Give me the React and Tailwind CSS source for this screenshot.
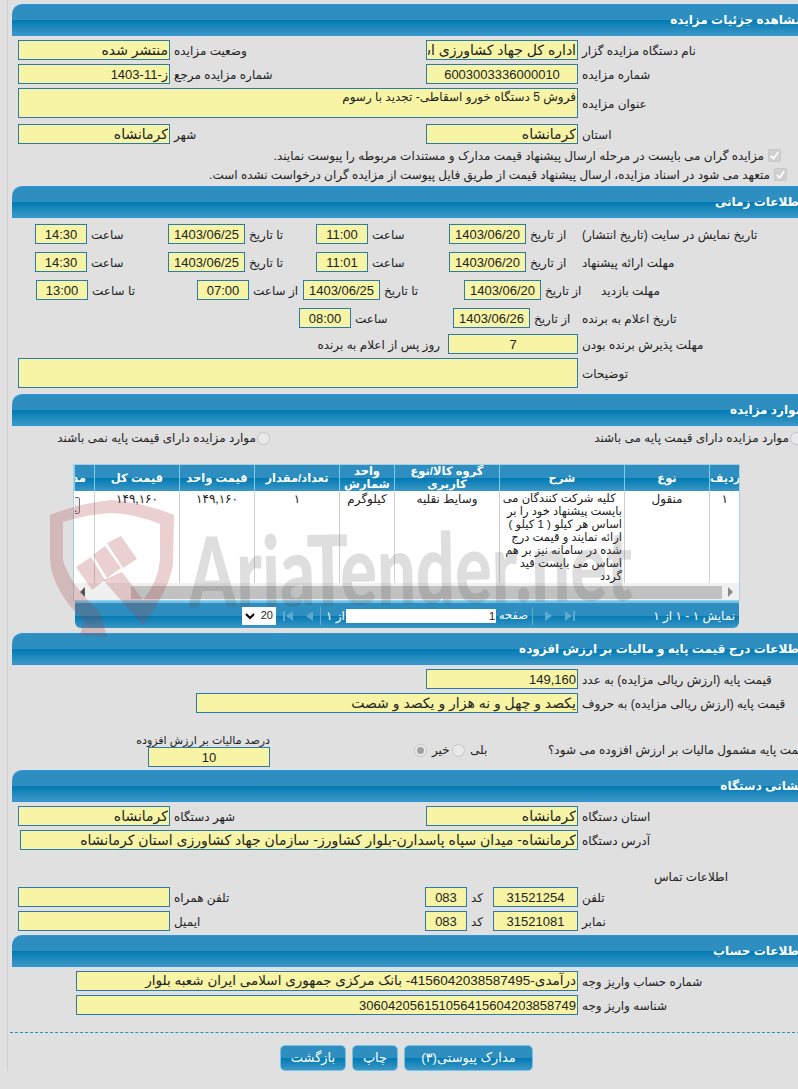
import React from "react";

const headerBg =
  "bg-[linear-gradient(#2e8ebf_0%,#2e8ebf_50%,#0079b2_50%,#3c97c6_100%)]";

const Field = ({ w, value = "", center, size }) => {
  const digits = /^[\d/:,\-ز]*$/.test(value);
  const textSize = size || (digits ? "text-[13px]" : "text-[14px]");
  return (
    <input
      readOnly
      dir="rtl"
      value={value}
      className={`block h-[20px] shrink-0 border border-[#2a7bab] bg-[#f7f5a5] px-[1px] text-[#222] outline-none ${textSize} ${
        center ? "text-center" : "text-right"
      } ${w}`}
    />
  );
};

const Area = ({ w, h, value = "" }) => (
  <textarea
    readOnly
    dir="rtl"
    value={value}
    className={`shrink-0 resize-none overflow-hidden border border-[#2a7bab] bg-[#f7f5a5] px-[1px] text-right text-[12px] leading-[17px] text-[#222] outline-none ${w} ${h}`}
  />
);

const Label = ({ w, right, children }) => (
  <span
    dir="rtl"
    className={`shrink-0 whitespace-nowrap pt-[1px] text-[12px] text-[#222] ${
      right ? "pr-[8px] text-right" : "pl-[4px] text-left"
    } ${w}`}
  >
    {children}
  </span>
);

const Row = ({ className = "", children }) => (
  <div className={`flex items-center ${className}`}>{children}</div>
);

const Section = ({ title, body, children }) => (
  <section className="w-[791px]">
    <div
      dir="rtl"
      className={`flex h-[32px] items-center overflow-hidden rounded-tl-[10px] border-y border-[#2a96e0] text-[12px] font-bold text-white ${headerBg}`}
    >
      {title}
    </div>
    <div className={body}>{children}</div>
  </section>
);

const Th = ({ clip, children }) => (
  <th
    className={`h-[26px] overflow-hidden border-l border-[#7ccdf0] text-[11.5px] font-bold leading-[13px] text-white ${headerBg} ${
      clip ? "whitespace-nowrap pr-[8px] text-right" : "px-0 text-center"
    }`}
  >
    {children}
  </th>
);

const Td = ({ children }) => (
  <td className="border-l border-[#cfcfcf] px-[4px] pt-[2px] align-top text-center text-[12px] leading-[13px] text-[#222]">
    {children}
  </td>
);

const Tri = ({ left, bar }) => (
  <svg viewBox="0 0 12 10" className="h-[10px] w-[12px] shrink-0 fill-[#5ea9d0]">
    <path d={left ? "M10 0v10L3 5z" : "M2 0v10l7-5z"} />
    {bar && <rect x={left ? 0 : 10} width="2" height="10" />}
  </svg>
);

const Btn = ({ w, children }) => (
  <button
    dir="rtl"
    className={`h-[26px] rounded-[5px] border border-[#74c4ea] text-[13px] text-white ${headerBg} ${w}`}
  >
    {children}
  </button>
);

const Radio = ({ checked }) => (
  <span className="flex h-[13px] w-[13px] shrink-0 items-center justify-center rounded-full border border-[#c4c4c4] bg-[#e9e9e9]">
    {checked && <span className="h-[7px] w-[7px] rounded-full bg-[#a0a0a0]" />}
  </span>
);

const Check = () => (
  <span className="flex h-[13px] w-[13px] shrink-0 items-center justify-center rounded-[2px] border border-[#c8c8c8] bg-[#d0d0d0]">
    <svg viewBox="0 0 12 12" className="h-[11px] w-[11px] fill-none stroke-white stroke-2">
      <path d="M2 6.5l3 3 5-7" />
    </svg>
  </span>
);

const Watermark = () => (
  <>
    <svg
      viewBox="0 0 798 1089"
      className="pointer-events-none absolute left-0 top-0 h-[1089px] w-[798px]"
    >
      <g fill="#a83a3a" fillOpacity="0.24">
        <path d="M50 515Q80 503 112 500Q145 503 174 515L173 565Q168 592 143 625L103 580L122 572L143 600Q158 582 160 560L160 524Q135 514 112 513Q88 514 63 522L63 560Q70 585 100 612L107 637L80 635L84 621Q52 590 50 560z" />
        <path d="M76 567L91 557L105 580L92 590z" />
        <path d="M93 555L105 546L121 568L107 578z" />
        <path d="M107 543L121 536L137 559L123 568z" />
      </g>
    </svg>
    <span className="pointer-events-none absolute left-[188px] top-[497px] origin-left -rotate-1 scale-x-[0.7] whitespace-nowrap text-[98px] font-black text-[#50505030] [font-family:Lato,sans-serif]">
      AriaTender.net
    </span>
  </>
);

export default function App() {
  return (
    <div className="relative h-[1089px] w-[798px] overflow-hidden bg-[#e0e0e0] [font-family:'Liberation_Sans','DejaVu_Sans',sans-serif]">
      <div className="ml-[7px] w-[900px] border-l border-[#cfcfcf] pl-[4px] pt-[4px]">
        <Section title="مشاهده جزئیات مزایده" body="h-[150px] pt-[4px]">
          <Row className="pl-[6px]">
            <Field w="w-[152px]" value="منتشر شده" />
            <Label w="w-[256px]">وضعیت مزایده</Label>
            <Field w="w-[152px]" value="اداره کل جهاد کشاورزی استان کرمانشاه" />
            <Label w="w-[200px]">نام دستگاه مزایده گزار</Label>
          </Row>
          <Row className="mt-[4px] pl-[6px]">
            <Field w="w-[152px]" value="ز-11-1403" />
            <Label w="w-[256px]">شماره مزایده مرجع</Label>
            <Field w="w-[152px]" value="6003003336000010" center />
            <Label w="w-[200px]">شماره مزایده</Label>
          </Row>
          <Row className="mt-[4px] pl-[6px]">
            <Area w="w-[560px]" h="h-[30px]" value="فروش 5 دستگاه خورو اسقاطی- تجدید با رسوم" />
            <Label w="w-[200px]">عنوان مزایده</Label>
          </Row>
          <Row className="mt-[6px] pl-[6px]">
            <Field w="w-[152px]" value="کرمانشاه" />
            <Label w="w-[256px]">شهر</Label>
            <Field w="w-[152px]" value="کرمانشاه" />
            <Label w="w-[200px]">استان</Label>
          </Row>
          <div dir="rtl" className="mt-[4px] flex h-[15px] items-center gap-[4px] pr-[22px] text-[12px] text-[#222]">
            <Check />
            <span>مزایده گران می بایست در مرحله ارسال پیشنهاد قیمت مدارک و مستندات مربوطه را پیوست نمایند.</span>
          </div>
          <div dir="rtl" className="mt-[4px] flex h-[15px] items-center gap-[4px] pr-[16px] text-[12px] text-[#222]">
            <Check />
            <span>متعهد می شود در اسناد مزایده، ارسال پیشنهاد قیمت از طریق فایل پیوست از مزایده گران درخواست نشده است.</span>
          </div>
        </Section>

        <Section title="اطلاعات زمانی" body="h-[176px] pt-[6px]">
          <Row className="pl-[23px]">
            <Field w="w-[52px]" value="14:30" center />
            <Label w="w-[81px]">ساعت</Label>
            <Field w="w-[77px]" value="1403/06/25" center />
            <Label w="w-[71px]">تا تاریخ</Label>
            <Field w="w-[52px]" value="11:00" center />
            <Label w="w-[81px]">ساعت</Label>
            <Field w="w-[77px]" value="1403/06/20" center />
            <Label w="w-[52px]">از تاریخ</Label>
            <Label w="w-[200px]">تاریخ نمایش در سایت (تاریخ انتشار)</Label>
          </Row>
          <Row className="mt-[8px] pl-[23px]">
            <Field w="w-[52px]" value="14:30" center />
            <Label w="w-[81px]">ساعت</Label>
            <Field w="w-[77px]" value="1403/06/25" center />
            <Label w="w-[71px]">تا تاریخ</Label>
            <Field w="w-[52px]" value="11:01" center />
            <Label w="w-[81px]">ساعت</Label>
            <Field w="w-[77px]" value="1403/06/20" center />
            <Label w="w-[52px]">از تاریخ</Label>
            <Label w="w-[200px]">مهلت ارائه پیشنهاد</Label>
          </Row>
          <Row className="mt-[8px] pl-[24px]">
            <Field w="w-[52px]" value="13:00" center />
            <Label w="w-[109px]">تا ساعت</Label>
            <Field w="w-[52px]" value="07:00" center />
            <Label w="w-[54px]">از ساعت</Label>
            <Field w="w-[77px]" value="1403/06/25" center />
            <Label w="w-[84px]">تا تاریخ</Label>
            <Field w="w-[77px]" value="1403/06/20" center />
            <Label w="w-[56px]">از تاریخ</Label>
            <Label w="w-[200px]">مهلت بازدید</Label>
          </Row>
          <Row className="mt-[8px] pl-[287px]">
            <Field w="w-[52px]" value="08:00" center />
            <Label w="w-[102px]">ساعت</Label>
            <Field w="w-[77px]" value="1403/06/26" center />
            <Label w="w-[48px]">از تاریخ</Label>
            <Label w="w-[200px]">تاریخ اعلام به برنده</Label>
          </Row>
          <Row className="mt-[6px]">
            <Label right w="w-[436px]">روز پس از اعلام به برنده</Label>
            <Field w="w-[130px]" value="7" center />
            <Label w="w-[200px]">مهلت پذیرش برنده بودن</Label>
          </Row>
          <Row className="mt-[4px] pl-[6px]">
            <Area w="w-[560px]" h="h-[30px]" />
            <Label w="w-[200px]">توضیحات</Label>
          </Row>
        </Section>

        <Section title="موارد مزایده" body="h-[207px] pt-[3px]">
          <div className="flex h-[18px] items-center">
            <div dir="rtl" className="ml-[43px] flex w-[215px] items-center justify-start gap-[1px] text-[12px] text-[#222]">
              <Radio />
              <span className="whitespace-nowrap">موارد مزایده دارای قیمت پایه نمی باشند</span>
            </div>
            <div dir="rtl" className="ml-[322px] flex w-[211px] items-center gap-[1px] text-[12px] text-[#222]">
              <Radio />
              <span className="whitespace-nowrap">موارد مزایده دارای قیمت پایه می باشند</span>
            </div>
          </div>
          <div className="ml-[61px] mt-[17px] h-[137px] w-[667px] overflow-hidden border border-[#a5cfe6] bg-white">
            <table dir="rtl" className="w-[665px] table-fixed border-collapse">
              <colgroup>
                <col className="w-[30px]" />
                <col className="w-[85px]" />
                <col className="w-[125px]" />
                <col className="w-[105px]" />
                <col className="w-[55px]" />
                <col className="w-[85px]" />
                <col className="w-[75px]" />
                <col className="w-[85px]" />
                <col className="w-[20px]" />
              </colgroup>
              <thead>
                <tr>
                  <Th>ردیف</Th>
                  <Th>نوع</Th>
                  <Th>شرح</Th>
                  <Th>گروه کالا/نوع کاربری</Th>
                  <Th>واحد شمارش</Th>
                  <Th>تعداد/مقدار</Th>
                  <Th>قیمت واحد</Th>
                  <Th>قیمت کل</Th>
                  <Th clip>مدارک</Th>
                </tr>
              </thead>
              <tbody>
                <tr className="h-[92px]">
                  <Td>۱</Td>
                  <Td>منقول</Td>
                  <td className="whitespace-nowrap border-l border-[#cfcfcf] pr-[2px] pt-[1px] align-top text-right text-[11.5px] leading-[13px] text-[#222]">
                    &nbsp;&nbsp;کلیه شرکت کنندگان می
                    <br />
                    بایست پیشنهاد خود را بر
                    <br />
                    اساس هر کیلو ( 1 کیلو )
                    <br />
                    ارائه نمایند و قیمت درج
                    <br />
                    شده در سامانه نیز بر هم
                    <br />
                    اساس می بایست قید
                    <br />
                    گردد
                  </td>
                  <Td>وسایط نقلیه</Td>
                  <Td>کیلوگرم</Td>
                  <Td>۱</Td>
                  <Td>۱۴۹,۱۶۰</Td>
                  <Td>۱۴۹,۱۶۰</Td>
                  <td className="overflow-hidden pt-[6px] align-top">
                    <span className="mr-[14px] flex h-[17px] w-[14px] items-center justify-center rounded-[2px] border border-[#777] bg-[#eee] text-[10px]">ج</span>
                  </td>
                </tr>
              </tbody>
            </table>
            <div className="flex h-[18px] items-center bg-[#f0f0f0]">
              <svg viewBox="0 0 8 10" className="ml-[5px] h-[10px] w-[8px] fill-[#555]">
                <path d="M6 0v10L1 5z" />
              </svg>
              <div className="ml-[44px] h-[13px] w-[591px] bg-[#c1c1c1]" />
              <svg viewBox="0 0 8 10" className="ml-[4px] h-[10px] w-[8px] fill-[#888]">
                <path d="M2 0v10l5-5z" />
              </svg>
            </div>
          </div>
          <div className={`ml-[63px] flex h-[27px] w-[664px] items-center rounded-b-[6px] border-t-2 border-[#6cc4ec] text-[12px] text-white ${headerBg}`}>
            <div className="ml-[167px] flex h-[18px] w-[34px] shrink-0 items-center justify-between bg-white px-[3px] text-[11px] text-[#222]">
              <svg viewBox="0 0 10 8" className="h-[8px] w-[10px] fill-none stroke-black stroke-2">
                <path d="M1 2l4 4 4-4" />
              </svg>
              20
            </div>
            <div className="ml-[7px] flex gap-[8px]">
              <Tri left bar />
              <Tri left />
            </div>
            <div className="ml-[5px] h-[18px] w-px bg-[#6aa8c8]" />
            <span dir="rtl" className="ml-[5px] w-[20px] whitespace-nowrap text-left">از ۱</span>
            <div dir="rtl" className="h-[14px] w-[150px] bg-white px-[1px] text-right text-[11px] leading-[14px] text-[#222]">1</div>
            <span dir="rtl" className="ml-[4px] w-[28px] whitespace-nowrap text-[11.5px]">صفحه</span>
            <div className="ml-[4px] h-[18px] w-px bg-[#6aa8c8]" />
            <div className="ml-[10px] flex gap-[8px]">
              <Tri />
              <Tri bar />
            </div>
            <span dir="rtl" className="ml-auto pr-[4px]">نمایش ۱ - ۱ از ۱</span>
          </div>
        </Section>

        <Section title="اطلاعات درج قیمت پایه و مالیات بر ارزش افزوده" body="h-[105px] pt-[4px]">
          <Row className="pl-[414px]">
            <Field w="w-[152px]" value="149,160" />
            <Label w="w-[220px]">قیمت پایه (ارزش ریالی مزایده) به عدد</Label>
          </Row>
          <Row className="mt-[4px] pl-[184px]">
            <Field w="w-[382px]" value="یکصد و چهل و نه هزار و یکصد و شصت" />
            <Label w="w-[230px]">قیمت پایه (ارزش ریالی مزایده) به حروف</Label>
          </Row>
          <div className="mt-[20px] flex items-end">
            <div className="ml-[136px] w-[122px]">
              <div dir="rtl" className="whitespace-nowrap text-[11px] leading-[14px] text-[#222]">درصد مالیات بر ارزش افزوده</div>
              <Field w="w-[122px]" value="10" center />
            </div>
            <div className="mb-[7px] ml-[144px] flex h-[20px] items-center">
              <Radio checked />
              <span dir="rtl" className="ml-[5px] w-[20px] text-left text-[12px] text-[#222]">خیر</span>
              <Radio />
              <span dir="rtl" className="ml-[5px] w-[78px] text-left text-[12px] text-[#222]">بلی</span>
              <span dir="rtl" className="whitespace-nowrap text-[12px] text-[#222]">قیمت پایه مشمول مالیات بر ارزش افزوده می شود؟</span>
            </div>
          </div>
        </Section>

        <Section title="نشانی دستگاه" body="h-[133px] pt-[4px]">
          <Row className="pl-[6px]">
            <Field w="w-[152px]" value="کرمانشاه" />
            <Label w="w-[256px]">شهر دستگاه</Label>
            <Field w="w-[152px]" value="کرمانشاه" />
            <Label w="w-[200px]">استان دستگاه</Label>
          </Row>
          <Row className="mt-[4px] pl-[8px]">
            <Field w="w-[558px]" value="کرمانشاه- میدان سپاه پاسدارن-بلوار کشاورز- سازمان جهاد کشاورزی استان کرمانشاه" />
            <Label w="w-[200px]">آدرس دستگاه</Label>
          </Row>
          <div dir="rtl" className="ml-[644px] mt-[18px] w-[72px] whitespace-nowrap text-[12px] leading-[18px] text-[#222]">اطلاعات تماس</div>
          <Row className="mt-[1px] pl-[6px]">
            <Field w="w-[152px]" />
            <Label w="w-[255px]">تلفن همراه</Label>
            <Field w="w-[42px]" value="083" center />
            <Label w="w-[26px]">کد</Label>
            <Field w="w-[85px]" value="31521254" center />
            <Label w="w-[100px]">تلفن</Label>
          </Row>
          <Row className="mt-[4px] pl-[6px]">
            <Field w="w-[152px]" />
            <Label w="w-[255px]">ایمیل</Label>
            <Field w="w-[42px]" value="083" center />
            <Label w="w-[26px]">کد</Label>
            <Field w="w-[85px]" value="31521081" center />
            <Label w="w-[100px]">نمابر</Label>
          </Row>
        </Section>

        <Section title="اطلاعات حساب" body="pt-[4px]">
          <Row className="pl-[64px]">
            <Field w="w-[502px]" size="text-[13.5px]" value="درآمدی-4156042038587495- بانک مرکزی جمهوری اسلامی ایران شعبه بلوار" />
            <Label w="w-[200px]">شماره حساب واریز وجه</Label>
          </Row>
          <Row className="mt-[4px] pl-[64px]">
            <Field w="w-[502px]" value="306042056151056415604203858749" />
            <Label w="w-[200px]">شناسه واریز وجه</Label>
          </Row>
        </Section>

        <div className="ml-[-2px] mt-[17px] w-[800px] border-t border-dashed border-[#2a8cc0]" />
        <div className="mt-[12px] flex gap-[6px] pl-[268px]">
          <Btn w="w-[66px]">بازگشت</Btn>
          <Btn w="w-[46px]">چاپ</Btn>
          <Btn w="w-[129px]">مدارک پیوستی(۳)</Btn>
        </div>
      </div>
      <Watermark />
    </div>
  );
}
